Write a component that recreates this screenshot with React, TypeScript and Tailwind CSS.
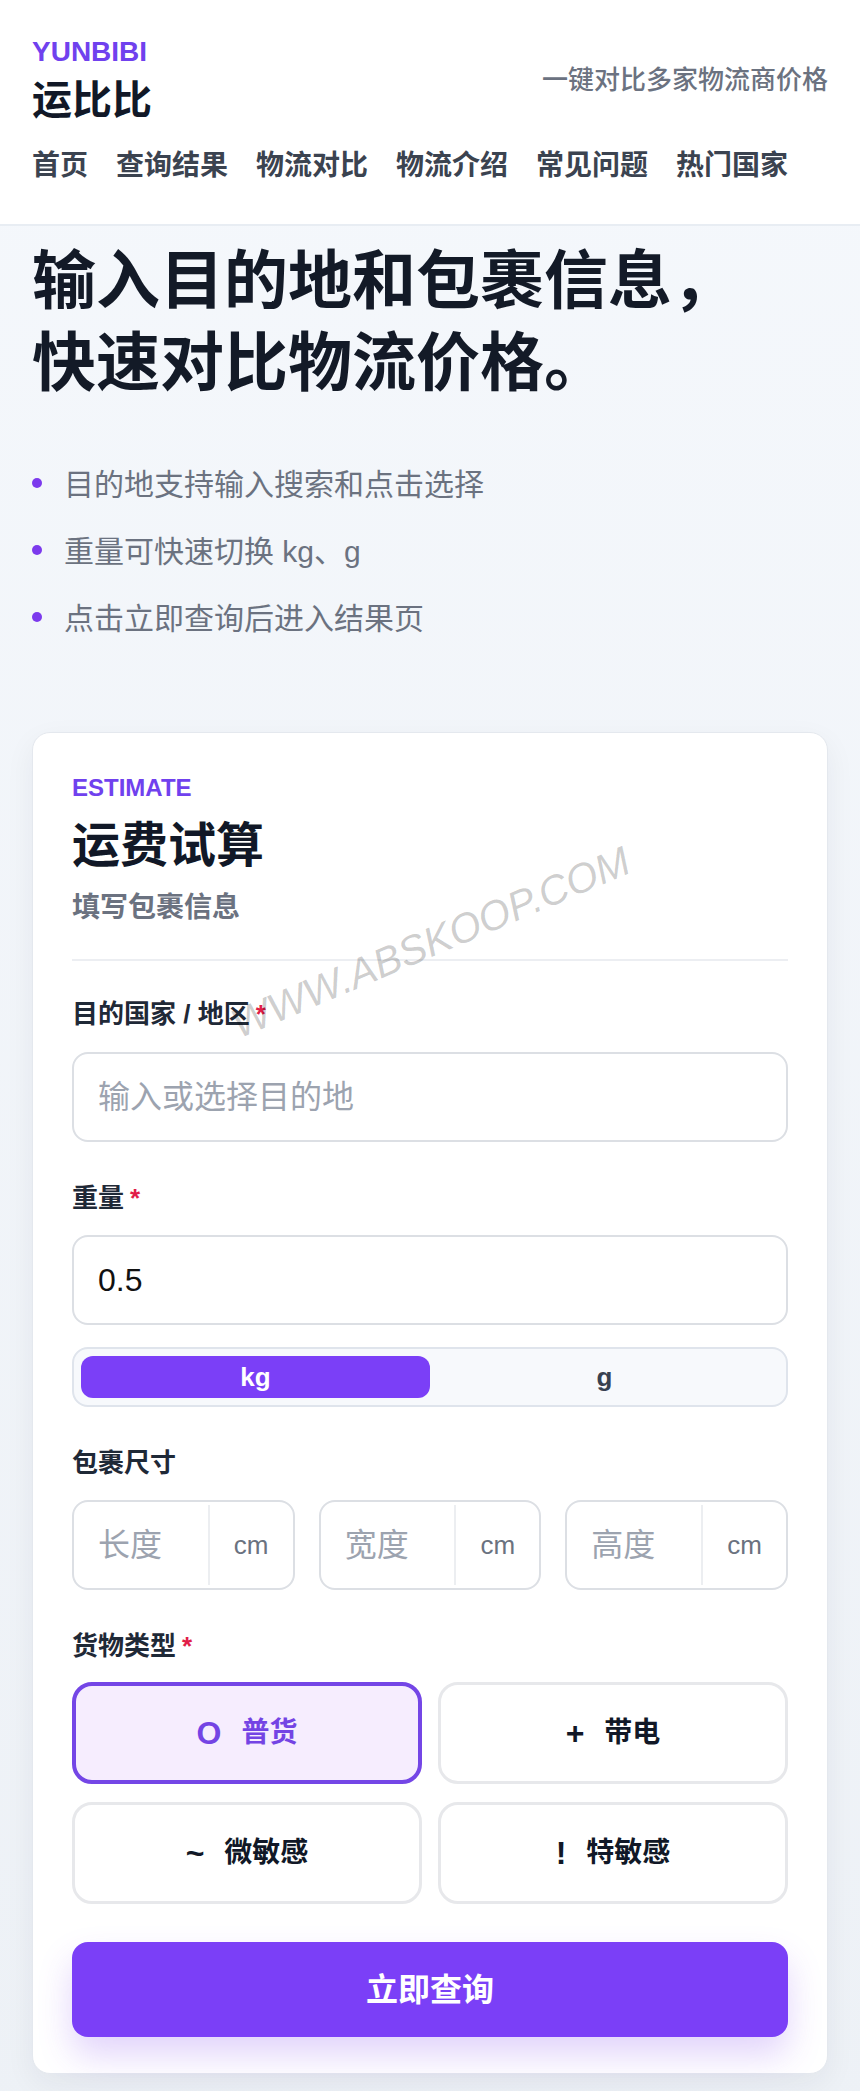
import { useState } from "react";

const FONT = { fontFamily: '"Liberation Sans", "Noto Sans CJK SC", sans-serif' };

const navItems = ["首页", "查询结果", "物流对比", "物流介绍", "常见问题", "热门国家"];

const tips = ["目的地支持输入搜索和点击选择", "重量可快速切换 kg、g", "点击立即查询后进入结果页"];

const cargoTypes = [
  { key: "normal", icon: "O", label: "普货" },
  { key: "battery", icon: "+", label: "带电" },
  { key: "mild", icon: "~", label: "微敏感" },
  { key: "special", icon: "!", label: "特敏感" },
];

function Label({ text, required }: { text: string; required?: boolean }) {
  return (
    <div className="text-[26px] leading-[36px] font-bold text-[#1f2937]">
      {text}
      {required && <span className="ml-[6px] text-[#e11d48]">*</span>}
    </div>
  );
}

function DimInput({ placeholder }: { placeholder: string }) {
  return (
    <div className="flex h-[90px] items-stretch rounded-[16px] border-2 border-[#dcdfe4] bg-white">
      <input
        placeholder={placeholder}
        className="w-0 min-w-0 flex-1 rounded-l-[16px] bg-transparent pl-[24px] text-[32px] text-[#111827] outline-none placeholder:text-[#9ca3af]"
      />
      <div className="my-[3px] w-[2px] bg-[#eceef1]" />
      <div className="flex w-[83px] items-center justify-center text-[26px] text-[#6b7280]">cm</div>
    </div>
  );
}

export default function App() {
  const [unit, setUnit] = useState<"kg" | "g">("kg");
  const [cargo, setCargo] = useState("normal");
  const [weight, setWeight] = useState("0.5");

  return (
    <div lang="zh-CN" style={FONT} className="min-h-screen bg-gradient-to-b from-[#f5f8fc] to-[#edf1f6] pb-[60px]">
      <header className="border-b-2 border-[#e8edf3] bg-white px-[32px] pt-[35px] pb-[40px]">
        <div className="flex items-center justify-between">
          <div>
            <div className="text-[28px] leading-[34px] font-bold text-[#7041ee]">YUNBIBI</div>
            <div className="mt-[7px] text-[40px] leading-[48px] font-bold text-[#111827]">运比比</div>
          </div>
          <div className="text-[26px] leading-[36px] font-medium text-[#6b7280]">一键对比多家物流商价格</div>
        </div>
        <nav className="mt-[24px] flex gap-[28px] text-[28px] leading-[36px] font-bold text-[#3b4350]">
          {navItems.map((item) => (
            <a key={item} href="#" className="whitespace-nowrap">
              {item}
            </a>
          ))}
        </nav>
      </header>

      <section className="px-[32px] pt-[14px]">
        <h1 className="text-[64px] leading-[82px] font-bold text-[#131a27]">
          输入目的地和包裹信息，
          <br />
          快速对比物流价格。
        </h1>
        <ul className="mt-[59px] flex flex-col gap-[23px]">
          {tips.map((tip) => (
            <li key={tip} className="flex items-center gap-[22px] text-[30px] leading-[44px] text-[#6b7280]">
              <span className="mb-[5px] h-[10px] w-[10px] shrink-0 rounded-full bg-[#7c3aed]" />
              {tip}
            </li>
          ))}
        </ul>
      </section>

      <div className="relative mx-[32px] mt-[91px] rounded-[18px] border border-[#e4e8ee] bg-white p-[39px] pb-[36px] shadow-[0_10px_30px_rgba(30,41,59,0.06)]">
        <div className="pointer-events-none absolute top-[210px] left-[398px] -translate-x-1/2 -translate-y-1/2 -rotate-[23deg] text-[41px] whitespace-nowrap italic text-[rgba(0,0,0,0.2)]">
          WWW.ABSKOOP.COM
        </div>

        <div className="text-[24px] leading-[32px] font-bold text-[#7041ee]">ESTIMATE</div>
        <h2 className="mt-[14px] text-[48px] leading-[56px] font-bold text-[#111827]">运费试算</h2>
        <p className="mt-[16px] text-[28px] leading-[36px] font-bold text-[#6b7280]">填写包裹信息</p>
        <div className="mt-[33px] h-[2px] bg-[#eceef2]" />

        <div className="mt-[35px]">
          <Label text="目的国家 / 地区" required />
          <input
            placeholder="输入或选择目的地"
            className="mt-[20px] block h-[90px] w-full rounded-[16px] border-2 border-[#dcdfe4] bg-white px-[24px] text-[32px] text-[#111827] outline-none placeholder:text-[#9ca3af]"
          />
        </div>

        <div className="mt-[38px]">
          <Label text="重量" required />
          <input
            value={weight}
            onChange={(e) => setWeight(e.target.value)}
            className="mt-[19px] block h-[90px] w-full rounded-[16px] border-2 border-[#dcdfe4] bg-white px-[24px] text-[32px] text-[#111111] outline-none"
          />
          <div className="mt-[22px] grid h-[60px] grid-cols-2 rounded-[16px] border-2 border-[#dfe4ec] bg-[#f7f9fc] p-[7px]">
            {(["kg", "g"] as const).map((u) => (
              <button
                key={u}
                onClick={() => setUnit(u)}
                className={
                  unit === u
                    ? "rounded-[12px] bg-[#7b3ff7] text-[26px] font-bold text-white"
                    : "rounded-[12px] text-[26px] font-bold text-[#374151]"
                }
              >
                {u}
              </button>
            ))}
          </div>
        </div>

        <div className="mt-[38px]">
          <Label text="包裹尺寸" />
          <div className="mt-[19px] grid grid-cols-3 gap-[24px]">
            <DimInput placeholder="长度" />
            <DimInput placeholder="宽度" />
            <DimInput placeholder="高度" />
          </div>
        </div>

        <div className="mt-[38px]">
          <Label text="货物类型" required />
          <div className="mt-[18px] grid grid-cols-2 gap-x-[16px] gap-y-[18px]">
            {cargoTypes.map((c) => (
              <button
                key={c.key}
                onClick={() => setCargo(c.key)}
                className={
                  cargo === c.key
                    ? "flex h-[102px] items-center justify-center gap-[20px] rounded-[20px] border-[4px] border-[#7446e6] bg-[#f6edfe] text-[28px] font-bold text-[#7444e4]"
                    : "flex h-[102px] items-center justify-center gap-[20px] rounded-[20px] border-[3px] border-[#e7e8eb] bg-white text-[28px] font-bold text-[#111827]"
                }
              >
                <span className="text-[32px] leading-[36px]">{c.icon}</span>
                <span>{c.label}</span>
              </button>
            ))}
          </div>
        </div>

        <button className="mt-[38px] h-[95px] w-full rounded-[16px] bg-[#7b3ff7] text-[32px] font-bold text-white shadow-[0_18px_34px_rgba(124,58,237,0.22)]">
          立即查询
        </button>
      </div>
    </div>
  );
}
